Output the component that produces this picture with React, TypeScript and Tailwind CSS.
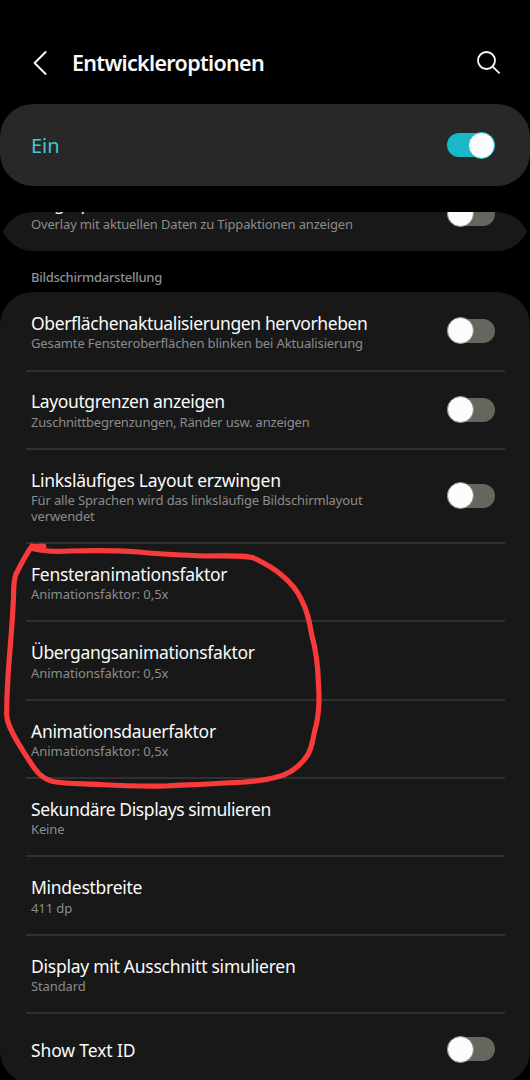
import clsx from "clsx";

interface DeveloperOption {
  title: string;
  summary?: string;
  titleTracking: string;
  summaryTracking?: string;
  height: string;
  toggle?: boolean;
}

const displayOptions: DeveloperOption[] = [
  {
    title: "Oberflächenaktualisierungen hervorheben",
    summary: "Gesamte Fensteroberflächen blinken bei Aktualisierung",
    titleTracking: "tracking-[-0.38px]",
    summaryTracking: "tracking-[-0.13px]",
    height: "h-[79.6px]",
    toggle: true,
  },
  {
    title: "Layoutgrenzen anzeigen",
    summary: "Zuschnittbegrenzungen, Ränder usw. anzeigen",
    titleTracking: "tracking-[-0.38px]",
    summaryTracking: "tracking-[-0.19px]",
    height: "h-[78.2px]",
    toggle: true,
  },
  {
    title: "Linksläufiges Layout erzwingen",
    summary: "Für alle Sprachen wird das linksläufige Bildschirmlayout verwendet",
    titleTracking: "tracking-[-0.26px]",
    summaryTracking: "tracking-[-0.14px]",
    height: "h-[94px]",
    toggle: true,
  },
  {
    title: "Fensteranimationsfaktor",
    summary: "Animationsfaktor: 0,5x",
    titleTracking: "tracking-[-0.27px]",
    summaryTracking: "tracking-[-0.03px]",
    height: "h-[78.4px]",
  },
  {
    title: "Übergangsanimationsfaktor",
    summary: "Animationsfaktor: 0,5x",
    titleTracking: "tracking-[-0.35px]",
    summaryTracking: "tracking-[-0.03px]",
    height: "h-[78.4px]",
  },
  {
    title: "Animationsdauerfaktor",
    summary: "Animationsfaktor: 0,5x",
    titleTracking: "tracking-[-0.3px]",
    summaryTracking: "tracking-[-0.03px]",
    height: "h-[78.4px]",
  },
  {
    title: "Sekundäre Displays simulieren",
    summary: "Keine",
    titleTracking: "tracking-[-0.4px]",
    summaryTracking: "tracking-[-0.15px]",
    height: "h-[78.4px]",
  },
  {
    title: "Mindestbreite",
    summary: "411 dp",
    titleTracking: "tracking-[-0.28px]",
    summaryTracking: "tracking-[-0.1px]",
    height: "h-[78.4px]",
  },
  {
    title: "Display mit Ausschnitt simulieren",
    summary: "Standard",
    titleTracking: "tracking-[-0.26px]",
    summaryTracking: "tracking-[-0.13px]",
    height: "h-[78.4px]",
  },
  {
    title: "Show Text ID",
    titleTracking: "tracking-[-0.12px]",
    height: "h-[69.9px]",
    toggle: true,
  },
];

export default function App() {
  return (
    <main className="relative flex h-[1080px] w-[530px] flex-col overflow-hidden bg-black font-['Noto_Sans',sans-serif] text-[#fafafa]">
      <Header />
      <section className="flex h-[82px] shrink-0 items-center justify-between rounded-[33px] bg-[#282828] pr-[35px] pl-[31px]">
        <span className="pt-0.5 text-[20px] leading-6 text-[#45c9d3]">Ein</span>
        <Switch checked />
      </section>

      <ScrolledCard />

      <h2 className="mt-4 h-[25.5px] shrink-0 pl-[31px] text-[13px] leading-5 font-medium tracking-[-0.28px] text-[#8f8f8f]">
        Bildschirmdarstellung
      </h2>

      <section className="shrink-0 rounded-[33px] bg-[#181818]">
        {displayOptions.map((option, index) => (
          <OptionRow key={option.title} option={option} last={index === displayOptions.length - 1} />
        ))}
      </section>

      <MarkerStroke />
    </main>
  );
}

function Header() {
  return (
    <header className="flex h-[104px] shrink-0 items-start pt-[45px] pr-[29px] pl-[32px]">
      <button type="button" aria-label="Zurück" className="mt-[5px]">
        <svg width="18" height="26" viewBox="0 0 18 26" fill="none" stroke="#fafafa" strokeWidth="1.9" strokeLinecap="round" strokeLinejoin="round">
          <path d="M13.6 2 2.6 13l11 11" />
        </svg>
      </button>
      <h1 className="ml-[22px] text-[21.5px] leading-9 font-semibold tracking-[-0.68px]">Entwickleroptionen</h1>
      <button type="button" aria-label="Suchen" className="mt-[5px] ml-auto">
        <svg width="24" height="26" viewBox="0 0 24 26" fill="none" stroke="#fafafa" strokeWidth="1.8">
          <circle cx="9.5" cy="10.5" r="8.5" />
          <path d="m15.6 16.6 7 6.7" />
        </svg>
      </button>
    </header>
  );
}

// Tail of the previous group, cut off by the rounded edge of the list
function ScrolledCard() {
  return (
    <section className="mt-[26px] flex h-[38.5px] shrink-0 flex-col justify-end overflow-hidden rounded-t-[33px]">
      <div className="flex h-[78px] shrink-0 items-center justify-between rounded-b-[33px] bg-[#181818] pr-[35px] pl-[31px]">
        <OptionText
          title="Zeigerposition"
          titleTracking="tracking-[-0.45px]"
          summary="Overlay mit aktuellen Daten zu Tippaktionen anzeigen"
          summaryTracking="tracking-[-0.16px]"
        />
        <div className="pt-1">
          <Switch />
        </div>
      </div>
    </section>
  );
}

function OptionRow({ option, last }: { option: DeveloperOption; last: boolean }) {
  return (
    <div className={clsx("flex flex-col px-[25.5px]", option.height)}>
      <div className="flex min-h-0 flex-1 items-center justify-between pr-[9.5px] pl-[5.5px]">
        <OptionText
          title={option.title}
          titleTracking={option.titleTracking}
          summary={option.summary}
          summaryTracking={option.summaryTracking}
        />
        {option.toggle && <Switch />}
      </div>
      {!last && <div className="h-0.5 shrink-0 bg-[#303030]" />}
    </div>
  );
}

function OptionText({
  title,
  titleTracking,
  summary,
  summaryTracking = "tracking-normal",
}: {
  title: string;
  titleTracking: string;
  summary?: string | undefined;
  summaryTracking?: string | undefined;
}) {
  return (
    <div className={clsx("w-[350px]", !summary && "pt-0.5")}>
      <p className={clsx("text-[17.5px] leading-6 whitespace-nowrap", titleTracking)}>{title}</p>
      {summary && <p className={clsx("mt-[0.5px] text-[13px] leading-4 text-[#8c8c8c]", summaryTracking)}>{summary}</p>}
    </div>
  );
}

function Switch({ checked = false }: { checked?: boolean }) {
  return (
    <span
      role="switch"
      aria-checked={checked}
      className={clsx(
        "flex h-6 w-12 shrink-0 items-center rounded-full",
        checked ? "justify-end bg-[#19b9c8]" : "bg-[#66665f]",
      )}
    >
      <span
        className={clsx(
          "size-[27px] shrink-0 rounded-full border bg-[#fcfcfc]",
          checked ? "border-[#19b9c8]" : "border-[#8a8a86]",
        )}
      />
    </span>
  );
}

// Freehand highlight around the three animation settings
function MarkerStroke() {
  return (
    <svg className="pointer-events-none absolute inset-0" width="530" height="1080" viewBox="0 0 530 1080" fill="none" stroke="#f83a3a" strokeLinecap="round" strokeLinejoin="round">
      <path
        strokeWidth="5.2"
        d="M32 546C27 553 20 566 16 574C13 581 14 592 13.300 601C12.500 620 11 637 10 650C8.500 668 6.500 690 6.700 715C7 724 12 732 17 741C24 753 30 762 35 769C40 776 45 779.500 53 781.500C66 784 85 783.500 100 784.500C125 786 150 786.500 167 786C185 785 200 784.500 225 783C245 782.500 262 781 277 777C290 774 300 766 307 756C313 748 313 735 316 726C319.500 711 319.500 698 318.500 685C318 664 316 650 312 636C309 620 307 610 301.500 600C297 589 290 582 281 574.500C272 567 264 563 256 559C249 555 230 556 205 556C180 555 155 554 139 552C110 550 90 550.500 70 551C55 552 43 551 34 549"
      />
      <path strokeWidth="6" d="M33.500 547 43.500 546.500" />
    </svg>
  );
}
